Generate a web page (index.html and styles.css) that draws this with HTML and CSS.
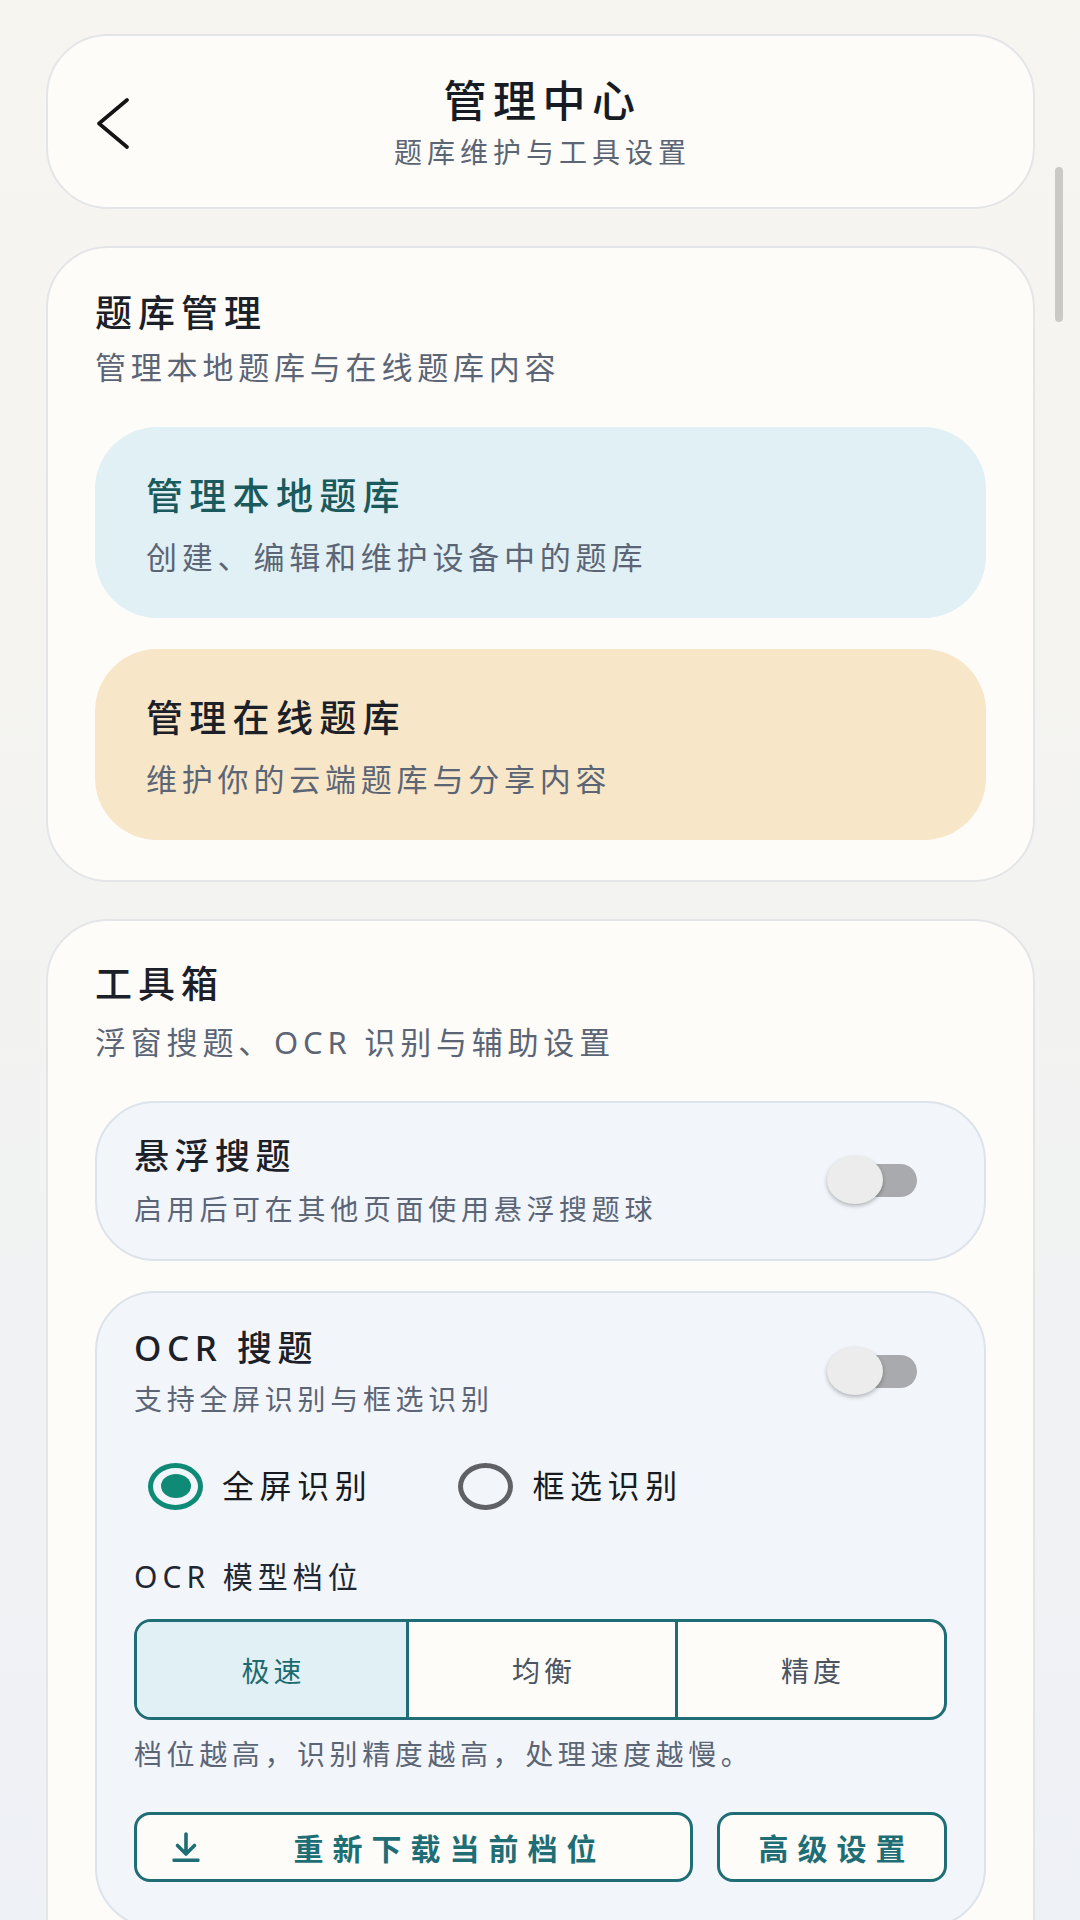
FILE: index.html
```html
<!DOCTYPE html>
<html lang="zh-CN">
<head>
<meta charset="utf-8">
<title>管理中心</title>
<link rel="stylesheet" href="styles.css">
</head>
<body>
<div class="page">
  <header class="card header">
    <div class="back">
      <svg width="34" height="52" viewBox="0 0 34 52"><polyline points="31,3 3,26.5 31,50" fill="none" stroke="#141414" stroke-width="3.6" stroke-linecap="round" stroke-linejoin="round"/></svg>
    </div>
    <div class="header-text">
      <div class="h-title">管理中心</div>
      <div class="h-sub">题库维护与工具设置</div>
    </div>
    <div></div>
  </header>

  <section class="card bank">
    <div class="sec-title">题库管理</div>
    <div class="sec-sub">管理本地题库与在线题库内容</div>
    <div class="tile tile-local">
      <div class="tile-title teal">管理本地题库</div>
      <div class="tile-sub">创建、编辑和维护设备中的题库</div>
    </div>
    <div class="tile tile-online">
      <div class="tile-title">管理在线题库</div>
      <div class="tile-sub">维护你的云端题库与分享内容</div>
    </div>
  </section>

  <section class="card tools">
    <div class="sec-title">工具箱</div>
    <div class="sec-sub sub-tools">浮窗搜题、OCR 识别与辅助设置</div>

    <div class="panel panel-float">
      <div class="panel-row">
        <div class="panel-text">
          <div class="p-title">悬浮搜题</div>
          <div class="p-sub">启用后可在其他页面使用悬浮搜题球</div>
        </div>
        <div class="toggle"><span class="track"></span><span class="thumb"></span></div>
      </div>
    </div>

    <div class="panel panel-ocr">
      <div class="panel-row">
        <div class="panel-text">
          <div class="p-title">OCR 搜题</div>
          <div class="p-sub">支持全屏识别与框选识别</div>
        </div>
        <div class="toggle"><span class="track"></span><span class="thumb"></span></div>
      </div>

      <div class="radios">
        <div class="radio on"><span class="ring"><span class="dot"></span></span><span class="r-label">全屏识别</span></div>
        <div class="radio"><span class="ring"></span><span class="r-label">框选识别</span></div>
      </div>

      <div class="model-label">OCR 模型档位</div>
      <div class="segmented">
        <div class="seg active">极速</div>
        <div class="seg">均衡</div>
        <div class="seg">精度</div>
      </div>
      <div class="hint">档位越高，识别精度越高，处理速度越慢。</div>

      <div class="buttons">
        <div class="btn btn-download">
          <svg class="dl-icon" width="28" height="31" viewBox="0 0 28 31"><path d="M14 2 V22 M5.5 13.5 L14 22 L22.5 13.5" fill="none" stroke="#1f6e76" stroke-width="3.6" stroke-linecap="round" stroke-linejoin="round"/><rect x="0.5" y="26.5" width="27" height="3.6" rx="1" fill="#1f6e76"/></svg>
          <span class="btn-text">重新下载当前档位</span>
        </div>
        <div class="btn btn-adv"><span class="btn-text">高级设置</span></div>
      </div>
    </div>
  </section>
</div>
<div class="scrollbar"></div>
</body>
</html>
```

FILE: styles.css
```css
* { box-sizing: border-box; }

html, body {
  margin: 0;
  padding: 0;
}

body {
  width: 1080px;
  min-height: 1920px;
  background: linear-gradient(180deg, #f7f5f0 0%, #f3f3f1 45%, #eef1f6 100%);
  font-family: "Noto Sans", "Noto Sans CJK SC", sans-serif;
  color: #1b2029;
  overflow: hidden;
}

.page {
  padding: 34px 45px 0 46px;
  display: flex;
  flex-direction: column;
  gap: 37px;
}

.card {
  background: #fdfcf9;
  border: 2px solid #e3e5e7;
  border-radius: 62px;
}

/* header */
.header {
  height: 175px;
  display: grid;
  grid-template-columns: 1fr auto 1fr;
  align-items: center;
}

.back {
  padding-left: 48px;
  display: flex;
  align-items: center;
  padding-top: 2px;
}

.header-text {
  text-align: center;
  padding-left: 4px;
}

.h-title {
  font-family: "Noto Sans CJK SC", sans-serif;
  font-size: 43px;
  line-height: 52px;
  font-weight: 500;
  letter-spacing: 6.5px;
  color: #161b24;
}

.h-sub {
  font-family: "Noto Sans CJK SC", sans-serif;
  font-size: 28px;
  line-height: 40px;
  letter-spacing: 5px;
  color: #5c6573;
  margin-top: 7px;
}

/* section cards */
.bank {
  padding: 41px 47px 40px 47px;
}

.tools {
  padding: 39px 47px 60px 47px;
}

.sec-title {
  font-size: 37px;
  line-height: 48px;
  font-weight: 500;
  letter-spacing: 6px;
  color: #1b2029;
}

.sec-sub {
  font-size: 31px;
  line-height: 40px;
  letter-spacing: 4.8px;
  color: #5b6576;
  margin-top: 10px;
}

.sub-tools {
  margin-top: 14px;
}

/* tiles */
.tile {
  border-radius: 62px;
  padding: 45px 52px 41px 51px;
  height: 191px;
}

.tile-local {
  background: #e1f0f4;
  margin-top: 40px;
}

.tile-online {
  background: #f7e7c8;
  margin-top: 31px;
}

.tile-title {
  font-size: 37px;
  line-height: 48px;
  font-weight: 500;
  letter-spacing: 6.3px;
  color: #1b2029;
}

.tile-title.teal {
  color: #1a5a5c;
}

.tile-sub {
  font-size: 31px;
  line-height: 40px;
  letter-spacing: 4.8px;
  color: #5b6576;
  margin-top: 17px;
}

/* panels */
.panel {
  background: #f2f6fb;
  border: 2px solid #dde3ea;
  border-radius: 60px;
}

.panel-float {
  margin-top: 39px;
  height: 160px;
  padding: 0 37px 0 37px;
  display: flex;
  align-items: center;
}

.panel-float .panel-row {
  width: 100%;
}

.panel-ocr {
  margin-top: 30px;
  padding: 33px 37px 44px 37px;
}

.panel-row {
  display: flex;
  align-items: center;
  justify-content: space-between;
}

.p-title {
  font-size: 35px;
  line-height: 44px;
  font-weight: 500;
  letter-spacing: 5.5px;
  color: #1b2029;
}

.p-sub {
  font-size: 28px;
  line-height: 38px;
  letter-spacing: 4.7px;
  color: #5b6576;
  margin-top: 12px;
}

.panel-ocr .p-sub {
  margin-top: 10px;
}

/* toggle */
.toggle {
  position: relative;
  width: 90px;
  height: 50px;
  margin-right: 30px;
  flex: none;
}

.track {
  position: absolute;
  right: 0;
  top: 8px;
  width: 78px;
  height: 33px;
  border-radius: 17px;
  background: #a9aaad;
}

.thumb {
  position: absolute;
  left: 0;
  top: 0;
  width: 56px;
  height: 48px;
  border-radius: 50%;
  background: #ececec;
  box-shadow: 0 2px 4px rgba(0, 0, 0, 0.28);
}

/* radios */
.radios {
  display: flex;
  align-items: center;
  height: 60px;
  margin-top: 38px;
  padding-left: 14px;
}

.radio {
  display: flex;
  align-items: center;
}

.radio + .radio {
  margin-left: 86px;
}

.ring {
  width: 55px;
  height: 47px;
  border-radius: 50%;
  border: 5.5px solid #5f6164;
  display: flex;
  align-items: center;
  justify-content: center;
  flex: none;
}

.radio.on .ring {
  border-color: #0e8a77;
}

.dot {
  width: 30px;
  height: 24px;
  border-radius: 50%;
  background: #0e8a77;
}

.r-label {
  margin-left: 19px;
  font-size: 32px;
  line-height: 44px;
  letter-spacing: 5.6px;
  color: #171a1f;
}

/* model */
.model-label {
  margin-top: 41px;
  font-size: 30px;
  line-height: 40px;
  letter-spacing: 5px;
  color: #1f2733;
}

.segmented {
  margin-top: 22px;
  height: 101px;
  display: grid;
  grid-template-columns: 1fr 1fr 1fr;
  border: 3px solid #1f6e75;
  border-radius: 17px;
  overflow: hidden;
  background: #fdfcf8;
}

.seg {
  display: flex;
  align-items: center;
  justify-content: center;
  font-size: 28px;
  letter-spacing: 4px;
  color: #4b5361;
  padding-left: 4px;
}

.seg + .seg {
  border-left: 3px solid #1f6e75;
}

.seg.active {
  background: #e1f0f4;
  color: #1d6a6f;
}

.hint {
  margin-top: 15px;
  font-size: 28px;
  line-height: 38px;
  letter-spacing: 4.6px;
  color: #5b6576;
}

/* buttons */
.buttons {
  margin-top: 39px;
  display: flex;
  gap: 24px;
}

.btn {
  height: 70px;
  border: 3px solid #1f6e76;
  border-radius: 16px;
  background: #fdfcf8;
  display: flex;
  align-items: center;
  color: #1f6e76;
}

.btn-download {
  width: 559px;
  padding-left: 35px;
}

.dl-icon {
  flex: none;
}

.btn-download .btn-text {
  flex: 1;
  text-align: center;
}

.btn-adv {
  flex: 1;
  justify-content: center;
}

.btn-text {
  font-family: "Noto Sans CJK SC", sans-serif;
  font-size: 30px;
  font-weight: 700;
  letter-spacing: 9px;
  padding-left: 9px;
}

/* overlay scrollbar */
.scrollbar {
  position: absolute;
  left: 1055px;
  top: 167px;
  width: 8px;
  height: 155px;
  border-radius: 4px;
  background: #cac9c6;
}
```
